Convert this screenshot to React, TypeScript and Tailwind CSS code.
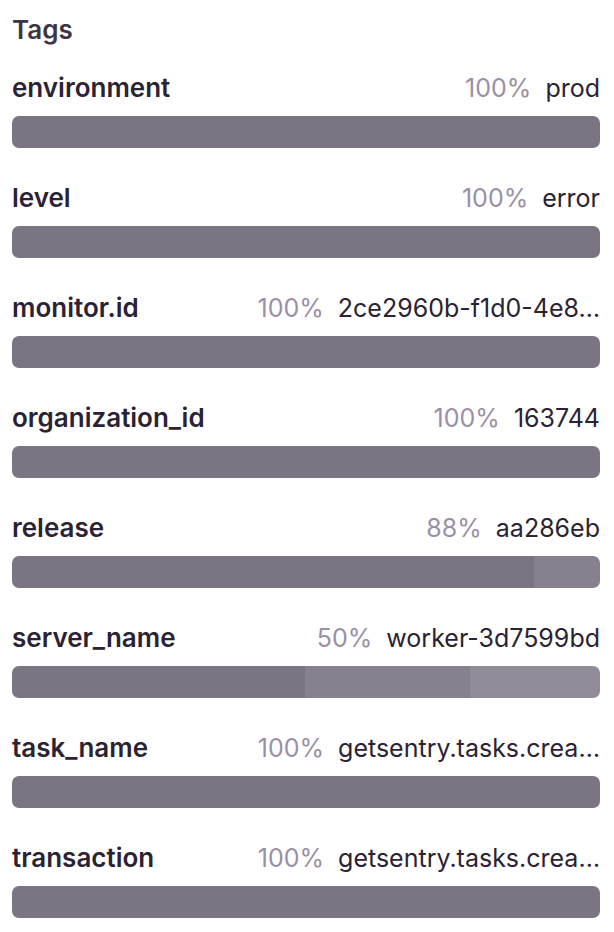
import React from 'react';

type Tag = {
  key: string;
  pct: number;
  value: string;
  segments: number[];
};

const TAGS: Tag[] = [
  { key: 'environment', pct: 100, value: 'prod', segments: [100] },
  { key: 'level', pct: 100, value: 'error', segments: [100] },
  { key: 'monitor.id', pct: 100, value: '2ce2960b-f1d0-4e8…', segments: [100] },
  { key: 'organization_id', pct: 100, value: '163744', segments: [100] },
  { key: 'release', pct: 88, value: 'aa286eb', segments: [88.8, 11.2] },
  { key: 'server_name', pct: 50, value: 'worker-3d7599bd', segments: [49.8, 28.1, 22.1] },
  { key: 'task_name', pct: 100, value: 'getsentry.tasks.crea…', segments: [100] },
  { key: 'transaction', pct: 100, value: 'getsentry.tasks.crea…', segments: [100] },
];

const SEGMENT_COLORS = ['bg-[#7b7583]', 'bg-[#86808f]', 'bg-[#918b9a]'];

const TagRow: React.FC<{ tag: Tag; first: boolean }> = ({ tag, first }) => (
  <div className={first ? 'mt-[26px]' : 'mt-[34px]'}>
    <div className="flex h-8 items-center justify-between gap-4 leading-8">
      <span className="shrink-0 text-[26px] font-semibold text-[#2b2233]">{tag.key}</span>
      <div className="flex min-w-0 items-center gap-[14px] text-[25px]">
        <span className="shrink-0 text-[#9a8fa6]">{tag.pct}%</span>
        <span className="whitespace-nowrap text-[#2b2233]">{tag.value}</span>
      </div>
    </div>
    <div className="mt-3 flex h-8 overflow-hidden rounded-[7px]">
      {tag.segments.map((w, i) => (
        <div key={i} className={SEGMENT_COLORS[i]} style={{ width: `${w}%` }} />
      ))}
    </div>
  </div>
);

export default function App() {
  return (
    <div className="min-h-screen bg-white pl-3 pr-[14px] pt-[14px] font-['Inter',sans-serif]">
      <h2 className="text-[26px] font-semibold leading-8 text-[#3e3446]">Tags</h2>
      {TAGS.map((t, i) => (
        <TagRow key={t.key} tag={t} first={i === 0} />
      ))}
    </div>
  );
}
